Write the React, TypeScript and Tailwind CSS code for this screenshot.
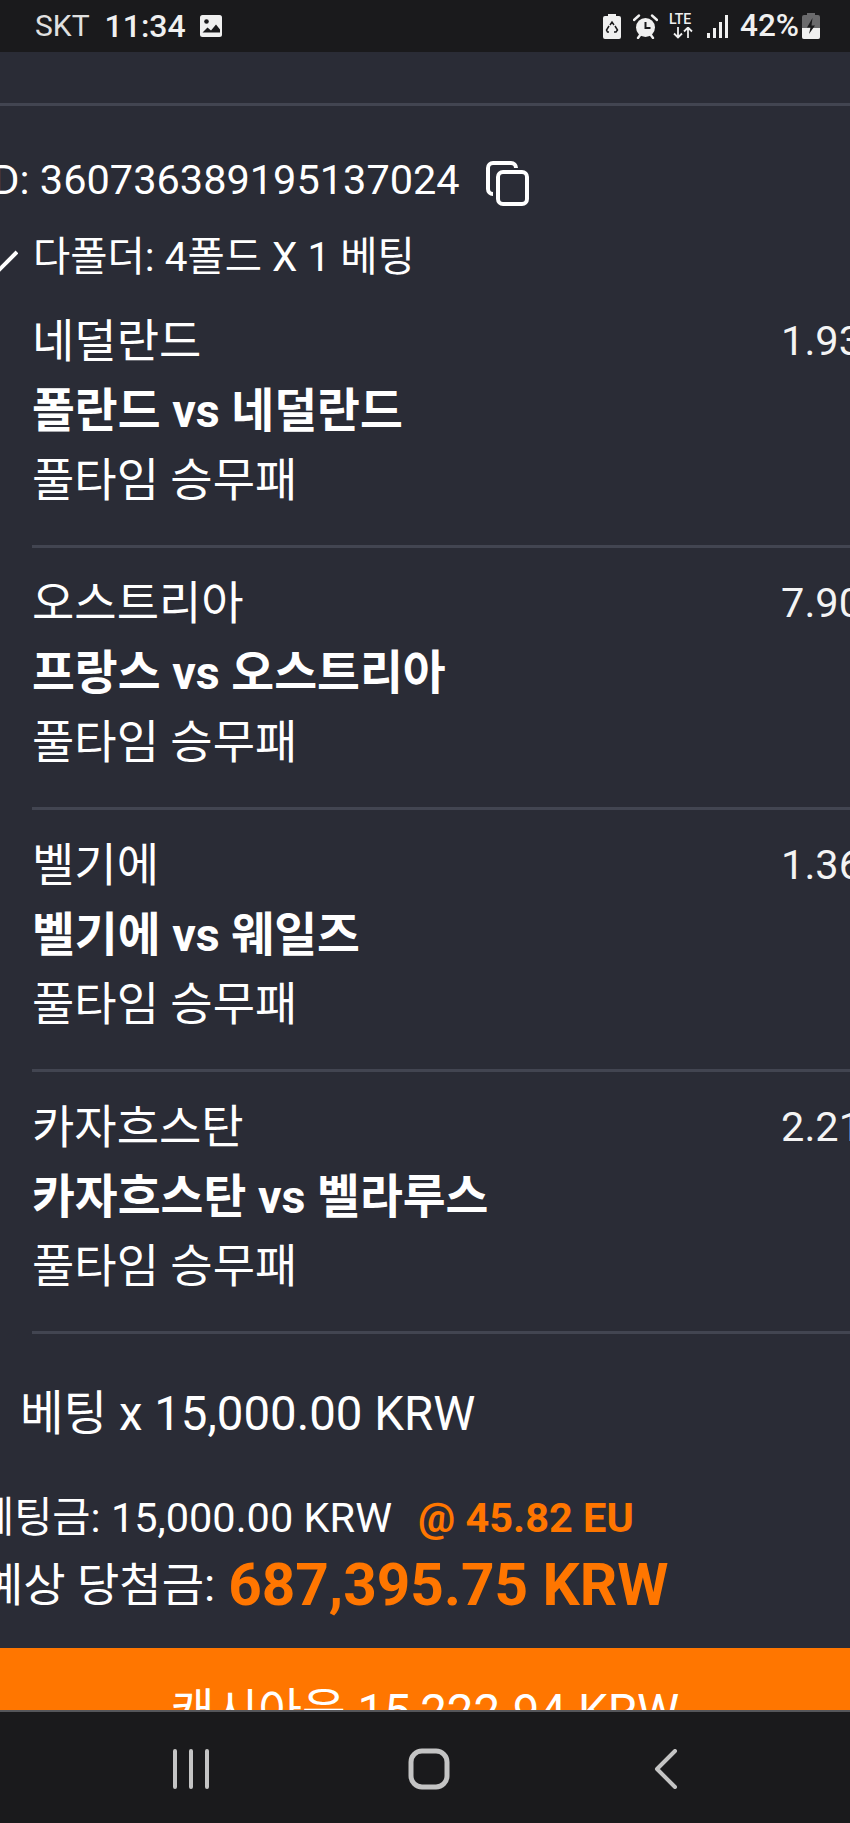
import React from "react";

const font = "font-['Roboto','Noto_Sans_CJK_KR',sans-serif]";

const bets = [
  { pick: "네덜란드", match: "폴란드 vs 네덜란드", odds: "1.93" },
  { pick: "오스트리아", match: "프랑스 vs 오스트리아", odds: "7.90" },
  { pick: "벨기에", match: "벨기에 vs 웨일즈", odds: "1.36" },
  { pick: "카자흐스탄", match: "카자흐스탄 vs 벨라루스", odds: "2.21" },
];

function StatusIcons() {
  return (
    <div className="flex items-center">
      {/* recycle battery */}
      <svg width="18" height="25" viewBox="0 0 18 25" className="mr-[12px]">
        <path d="M5 0h8v2h3a2 2 0 0 1 2 2v19a2 2 0 0 1-2 2H2a2 2 0 0 1-2-2V4a2 2 0 0 1 2-2h3z" fill="#f0f0f0" />
        <path d="M7 11l2-3 2 3M12 12l2.500 4-1.500 2h-2M6 18H4.500L3.500 16 6 12" stroke="#1a1a1c" strokeWidth="1.500" fill="none" />
      </svg>
      {/* alarm */}
      <svg width="25" height="25" viewBox="0 0 25 25" className="mr-[11px]">
        <circle cx="12.500" cy="13.500" r="9.500" fill="#f0f0f0" />
        <path d="M1 6l5-4.500M24 6l-5-4.500M5 24l2.500-3.500M20 24l-2.500-3.500" stroke="#f0f0f0" strokeWidth="2.400" strokeLinecap="round" />
        <path d="M12.500 8v6h5" stroke="#1a1a1c" strokeWidth="2" fill="none" />
      </svg>
      {/* lte */}
      <div className="relative h-[25px] w-[28px] mr-[10px]">
        <span className="absolute left-0 top-[-2px] text-[14px] leading-[14px] font-medium text-[#f0f0f0]">LTE</span>
        <svg width="28" height="12" viewBox="0 0 28 12" className="absolute left-0 bottom-0">
          <path d="M9 0v10M5 6.500l4 4 4-4M19 11V1M15 4.500l4-4 4 4" stroke="#f0f0f0" strokeWidth="1.800" fill="none" />
        </svg>
      </div>
      {/* signal */}
      <svg width="22" height="23" viewBox="0 0 22 23" className="mr-[11px]">
        <rect x="0" y="18" width="3" height="5" fill="#f0f0f0" />
        <rect x="6" y="13" width="3" height="10" fill="#f0f0f0" />
        <rect x="12" y="7" width="3" height="16" fill="#f0f0f0" />
        <rect x="18" y="0" width="3" height="23" fill="#f0f0f0" />
      </svg>
      <span className="text-[31.500px] leading-none font-medium text-[#f0f0f0] mr-[3px]">42%</span>
      {/* battery charging */}
      <svg width="18" height="26" viewBox="0 0 18 26">
        <path d="M5 0h8v2h3a2 2 0 0 1 2 2v20a2 2 0 0 1-2 2H2a2 2 0 0 1-2-2V4a2 2 0 0 1 2-2h3z" fill="#6a6a6c" />
        <path d="M0 15h18v9a2 2 0 0 1-2 2H2a2 2 0 0 1-2-2z" fill="#f0f0f0" />
        <path d="M10.500 5L5 14.500h3.500L7 21l6-8.500H9.500z" fill="#1a1a1c" />
      </svg>
    </div>
  );
}

export default function App() {
  return (
    <div className={`${font} flex h-[1823px] w-[850px] flex-col overflow-hidden bg-[#2a2c36] text-white`}>
      <div className="flex h-[52px] shrink-0 items-center justify-between bg-[#1a1a1c] pl-[35px] pr-[30px]">
        <div className="flex items-center">
          <span className="text-[30px] leading-none text-[#e0e0e0]">SKT</span>
          <span className="ml-[15px] text-[32px] leading-none font-medium text-[#f0f0f0]">11:34</span>
          <svg width="22" height="22" viewBox="0 0 22 22" className="ml-[14px]">
            <rect width="22" height="22" rx="2.500" fill="#f0f0f0" />
            <circle cx="6.500" cy="6.500" r="2.300" fill="#1a1a1c" />
            <path d="M2.500 17.500l5-5 3.500 3 5-6 4 5v3z" fill="#1a1a1c" />
          </svg>
        </div>
        <StatusIcons />
      </div>

      <div className="flex min-h-0 flex-1 flex-col overflow-hidden">
        <div className="mt-[51px] h-[3px] shrink-0 bg-[#424551]" />

        <div className="mt-[46px] -ml-[19px] flex h-[56px] shrink-0 items-center text-[41.500px] leading-none whitespace-nowrap">
          <span>ID: 360736389195137024</span>
          <svg width="43" height="45" viewBox="0 0 43 45" fill="none" stroke="white" strokeWidth="4" className="ml-[26px] mt-[6px]">
            <rect x="12" y="11" width="29" height="32" rx="5" />
            <path d="M7 33a5 5 0 0 1-5-5V7a5 5 0 0 1 5-5h18a5 5 0 0 1 5 5" />
          </svg>
        </div>

        <div className="mt-[30px] flex h-[38px] shrink-0 items-center whitespace-nowrap">
          <svg width="18" height="22" viewBox="0 0 18 22" fill="none" stroke="white" strokeWidth="4" className="mt-[8px] shrink-0">
            <path d="M-2 21L17 2" />
          </svg>
          <span className="ml-[15px] text-[40.500px] leading-none">다폴더: 4폴드 X 1 베팅</span>
        </div>

        <div className="mt-[10px] shrink-0">
          {bets.map((b) => (
            <div key={b.pick} className="ml-[32px] w-[880px] h-[262px] border-b-[3px] border-[#424551] pt-[21px]">
              <div className="flex items-center justify-between pr-[50px]">
                <span className="text-[46px] leading-[69px]">{b.pick}</span>
                <span className="text-[41.500px] leading-[69px] text-[#f4f4f4] relative -top-[1px]">{b.odds}</span>
              </div>
              <div className="text-[46.600px] leading-[70px] font-bold">{b.match}</div>
              <div className="text-[46px] leading-[69px]">풀타임 승무패</div>
            </div>
          ))}
        </div>

        <div className="mt-[52px] ml-[20px] shrink-0 text-[47.400px] leading-[56px] whitespace-nowrap">베팅 x 15,000.00 KRW</div>

        <div className="mt-[50px] -ml-[24px] flex h-[52px] shrink-0 items-center whitespace-nowrap text-[41.500px] leading-none">
          <span>베팅금: 15,000.00 KRW</span>
          <span className="ml-[26px] font-bold text-[#ff7600]">@ 45.82 EU</span>
        </div>
        <div className="mt-[10px] -ml-[19px] flex h-[62px] shrink-0 items-center whitespace-nowrap text-[46px] leading-none">
          <span>예상 당첨금:</span>
          <span className="ml-[13px] text-[58.500px] font-bold text-[#ff7600]">687,395.75 KRW</span>
        </div>

        <div className="mt-[32px] flex h-[80px] shrink-0 justify-center bg-[#ff7600] pt-[36px] text-[47.500px] leading-[56px] whitespace-nowrap">
          캐시아웃 15,222.94 KRW
        </div>
      </div>

      <div className="flex h-[113px] shrink-0 items-center justify-between border-t-2 border-[#55565a] bg-[#1a1a1c] pl-[173px] pr-[172px] pt-[2px]">
        <svg width="36" height="40" viewBox="0 0 36 40" stroke="#c4c4c4" strokeWidth="4" strokeLinecap="round">
          <path d="M2 2v36M18 2v36M34 2v36" />
        </svg>
        <svg width="42" height="42" viewBox="0 0 42 42" fill="none" stroke="#c4c4c4" strokeWidth="5" className="-ml-[6px]">
          <rect x="3" y="3" width="36" height="36" rx="11" />
        </svg>
        <svg width="24" height="40" viewBox="0 0 24 40" fill="none" stroke="#c4c4c4" strokeWidth="4" strokeLinecap="round" strokeLinejoin="round">
          <path d="M21 2L3 20l18 18" />
        </svg>
      </div>
    </div>
  );
}
